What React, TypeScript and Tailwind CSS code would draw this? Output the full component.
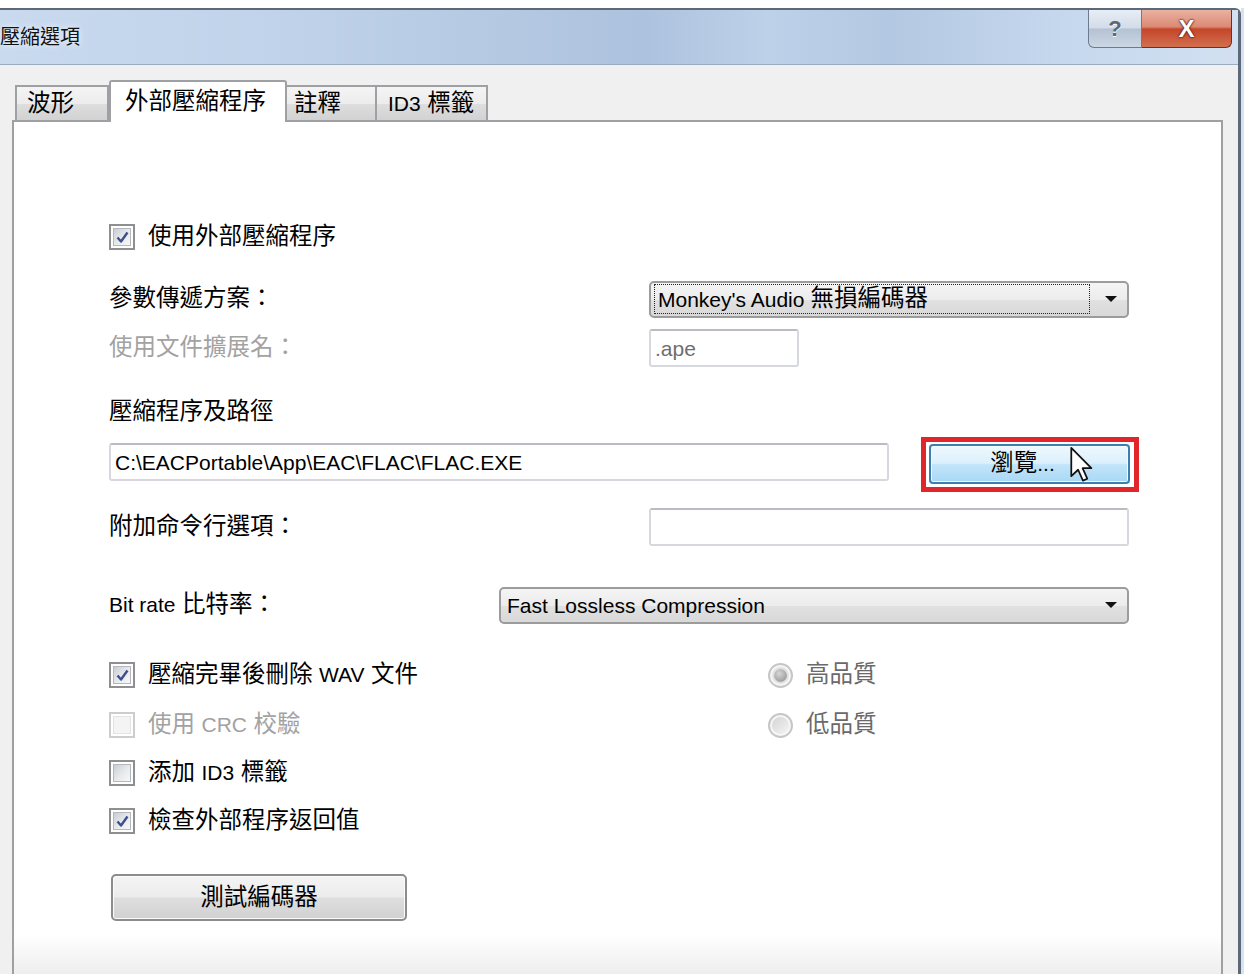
import React from 'react';

// Latin runs use a smaller size than the CJK glyphs so both match the reference widths
function L({ children }: { children: React.ReactNode }) {
  return <span className="text-[21px]">{children}</span>;
}

function Checkbox({ checked = false, disabled = false }: { checked?: boolean; disabled?: boolean }) {
  return (
    <div
      className={`w-[26px] h-[26px] shrink-0 border-2 bg-white p-[2px] ${
        disabled ? 'border-[#cdcdcd]' : 'border-[#8f8f8f]'
      }`}
    >
      <div
        className={`w-full h-full flex items-center justify-center border ${
          disabled
            ? 'border-[#e3e3e3] bg-[#f4f4f4]'
            : 'border-[#b4b8be] bg-[linear-gradient(135deg,#c9cdd3_0%,#e6e8eb_50%,#f8f8f8_100%)]'
        }`}
      >
        {checked && (
          <svg width="15" height="15" viewBox="0 0 15 15">
            <path d="M2.5 7.5 L6 11.5 L12.5 2.5" fill="none" stroke="#3c4f8e" strokeWidth="2.4" strokeLinejoin="round" />
          </svg>
        )}
      </div>
    </div>
  );
}

function Radio({ selected = false }: { selected?: boolean }) {
  return (
    <div className="w-[25px] h-[25px] shrink-0 rounded-full border-2 border-[#c6c6c6] bg-[#f6f6f6] flex items-center justify-center">
      {selected ? (
        <div className="w-[13px] h-[13px] rounded-full bg-[radial-gradient(circle_at_40%_35%,#d6d6d6_0%,#9a9a9a_80%)] shadow-[0_0_0_2px_#e2e2e2]" />
      ) : (
        <div className="w-[17px] h-[17px] rounded-full bg-[linear-gradient(135deg,#d4d4d4_0%,#f4f4f4_100%)]" />
      )}
    </div>
  );
}

function Arrow() {
  return (
    <svg width="14" height="8" viewBox="0 0 14 8" className="shrink-0">
      <path d="M1 1 L13 1 L7 7 Z" fill="#111" />
    </svg>
  );
}

function Combo({ children, width, focused = false }: { children: React.ReactNode; width: string; focused?: boolean }) {
  return (
    <div
      className={`${width} h-[37px] flex items-center rounded-[5px] border-2 border-[#9c9c9c] bg-[linear-gradient(to_bottom,#f4f4f4_0%,#ececec_50%,#e1e1e1_51%,#d9d9d9_100%)] pl-[3px] pr-[9px]`}
    >
      <div
        className={`flex-1 h-[30px] flex items-center pl-[3px] whitespace-nowrap ${
          focused ? 'border border-dotted border-[#222]' : ''
        }`}
      >
        {children}
      </div>
      <div className="w-[28px] flex justify-end">
        <Arrow />
      </div>
    </div>
  );
}

function TextBox({ width, children, muted = false }: { width: string; children?: React.ReactNode; muted?: boolean }) {
  return (
    <div
      className={`${width} h-[38px] flex items-center rounded-[3px] border-2 border-[#d5d8dd] border-t-[#b9bcc2] bg-white pl-[4px] whitespace-nowrap ${
        muted ? 'text-[#6e6e6e]' : ''
      }`}
    >
      {children}
    </div>
  );
}

function Tab({ label, active = false, width, pl }: { label: React.ReactNode; active?: boolean; width: string; pl: string }) {
  if (active) {
    return (
      <div
        className={`${width} ${pl} h-[42px] -mb-[2px] relative z-10 flex items-center border-2 border-b-0 border-[#9ea0a3] bg-white rounded-t-[3px]`}
      >
        {label}
      </div>
    );
  }
  return (
    <div
      className={`${width} ${pl} h-[35px] flex items-center border-2 border-b-0 border-[#9ea0a3] -ml-[2px] first:ml-0 bg-[linear-gradient(to_bottom,#f4f4f4_0%,#ececec_50%,#dedede_51%,#d2d2d2_100%)]`}
    >
      {label}
    </div>
  );
}

export default function App() {
  return (
    <div className="w-[1244px] h-[974px] overflow-hidden bg-white text-black text-[23.5px] leading-none font-['Liberation_Sans','Noto_Sans_CJK_TC',sans-serif]">
      <div className="h-[8px]" />
      <div className="flex h-[966px]">
        <div className="w-[1241px] h-full flex flex-col border-t-2 border-r-[3px] border-[#5d6979] rounded-tr-[6px] bg-[#c8daee]">
          {/* title bar */}
          <div className="h-[55px] shrink-0 flex justify-between items-start pr-[6px] border-b border-[#9aabc2] bg-[linear-gradient(to_right,#c9daef_0%,#c0d3ea_22%,#b6cae3_38%,#adc2de_52%,#bdd1e9_62%,#b3c8e2_72%,#c6d8ee_86%,#d2e0f1_100%)]">
            <div className="h-full flex items-center text-[20px] text-[#111] [text-shadow:0_0_6px_#ffffff]">壓縮選項</div>
            <div className="flex">
              <div className="w-[54px] h-[38px] flex items-center justify-center rounded-bl-[6px] border border-t-0 border-[#6c7b8f] bg-[linear-gradient(to_bottom,#e8eef6_0%,#d3dce8_48%,#b4c2d3_52%,#ccd7e4_100%)] text-[22px] font-bold text-[#5b6677] [text-shadow:0_1px_0_#ffffff]">
                ?
              </div>
              <div className="w-[90px] h-[38px] flex items-center justify-center rounded-br-[6px] border border-t-0 border-l-0 border-[#7a2a1c] bg-[linear-gradient(to_bottom,#eab1a3_0%,#db8a74_45%,#c5452a_52%,#d2704f_100%)] text-[24px] font-bold text-white [text-shadow:0_0_2px_#4a130a,0_0_2px_#4a130a]">
                X
              </div>
            </div>
          </div>

          {/* dialog body */}
          <div className="flex-1 min-h-0 flex flex-col bg-[#f0f0f0] pt-[15px] pl-[12px] pr-[15px]">
            <div className="flex items-end h-[40px] pl-[3px] shrink-0">
              <Tab label="波形" width="w-[94px]" pl="pl-[10px]" />
              <Tab label="外部壓縮程序" active width="w-[178px]" pl="pl-[14px]" />
              <Tab label="註釋" width="w-[92px]" pl="pl-[7px]" />
              <Tab label={<span><L>ID3</L> 標籤</span>} width="w-[113px]" pl="pl-[11px]" />
            </div>

            <div className="flex-1 min-h-[860px] flex flex-col border-2 border-[#9ea0a3] bg-[linear-gradient(to_bottom,#ffffff_0px,#ffffff_812px,#ececec_856px)] pl-[95px]">
              <div className="mt-[95px] h-[40px] flex items-center gap-[13px]">
                <Checkbox checked />
                <span>使用外部壓縮程序</span>
              </div>

              <div className="mt-[23px] h-[38px] flex items-center">
                <div className="w-[540px]">參數傳遞方案：</div>
                <Combo width="w-[480px]" focused>
                  <L>Monkey's Audio</L>
                  <span className="ml-[6px]">無損編碼器</span>
                </Combo>
              </div>

              <div className="mt-[10px] h-[40px] flex items-center">
                <div className="w-[540px] text-[#a2a2a2]">使用文件擴展名：</div>
                <TextBox width="w-[150px]" muted>
                  <L>.ape</L>
                </TextBox>
              </div>

              <div className="mt-[28px] h-[32px] flex items-center">壓縮程序及路徑</div>

              <div className="mt-[15px] h-[41px] flex items-start">
                <TextBox width="w-[780px]">
                  <L>C:\EACPortable\App\EAC\FLAC\FLAC.EXE</L>
                </TextBox>
                <div className="relative ml-[40px] mt-[1px]">
                  <div className="w-[201px] h-[40px] flex items-center justify-center rounded-[4px] border-2 border-[#3c7fb1] bg-[linear-gradient(to_bottom,#eef8fe_0%,#dbf0fc_48%,#c1e5fa_52%,#a9d8f4_100%)] shadow-[inset_0_0_0_1px_#f4fbff]">
                    <span className="-ml-[14px]">
                      瀏覽<L>...</L>
                    </span>
                  </div>
                  <div className="absolute -top-[7px] -left-[8px] -right-[9px] -bottom-[8px] border-[5px] border-[#e1262b] pointer-events-none" />
                  <svg className="absolute left-[140px] top-[2px]" width="26" height="37" viewBox="0 0 13 19">
                    <path
                      d="M1 1 L1 15.5 L4.5 12.2 L7 17.8 L9.2 16.8 L6.8 11.4 L11.3 11.4 Z"
                      fill="#ffffff"
                      stroke="#111"
                      strokeWidth="0.9"
                      strokeLinejoin="round"
                    />
                  </svg>
                </div>
              </div>

              <div className="mt-[23px] h-[40px] flex items-center">
                <div className="w-[540px]">附加命令行選項：</div>
                <TextBox width="w-[480px]" />
              </div>

              <div className="mt-[39px] h-[38px] flex items-center">
                <div className="w-[390px]">
                  <L>Bit rate</L> 比特率：
                </div>
                <Combo width="w-[630px]">
                  <L>Fast Lossless Compression</L>
                </Combo>
              </div>

              <div className="mt-[31px] h-[40px] flex items-center">
                <div className="w-[659px] flex items-center gap-[13px]">
                  <Checkbox checked />
                  <span>
                    壓縮完畢後刪除 <L>WAV</L> 文件
                  </span>
                </div>
                <div className="flex items-center gap-[13px] text-[#6a6a6a]">
                  <Radio selected />
                  <span>高品質</span>
                </div>
              </div>

              <div className="mt-[10px] h-[40px] flex items-center">
                <div className="w-[659px] flex items-center gap-[13px] text-[#a2a2a2]">
                  <Checkbox disabled />
                  <span>
                    使用 <L>CRC</L> 校驗
                  </span>
                </div>
                <div className="flex items-center gap-[13px] text-[#6a6a6a]">
                  <Radio />
                  <span>低品質</span>
                </div>
              </div>

              <div className="mt-[8px] h-[40px] flex items-center gap-[13px]">
                <Checkbox />
                <span>
                  添加 <L>ID3</L> 標籤
                </span>
              </div>

              <div className="mt-[8px] h-[40px] flex items-center gap-[13px]">
                <Checkbox checked />
                <span>檢查外部程序返回值</span>
              </div>

              <div className="mt-[33px] ml-[2px] w-[296px] h-[47px] flex items-center justify-center rounded-[5px] border-2 border-[#8c8c8c] bg-[linear-gradient(to_bottom,#f4f4f4_0%,#ececec_48%,#dedede_52%,#d1d1d1_100%)] shadow-[inset_0_0_0_1px_#fbfbfb]">
                測試編碼器
              </div>
            </div>
          </div>
        </div>
        <div className="flex-1 bg-[#d6e3f2]" />
      </div>
    </div>
  );
}
